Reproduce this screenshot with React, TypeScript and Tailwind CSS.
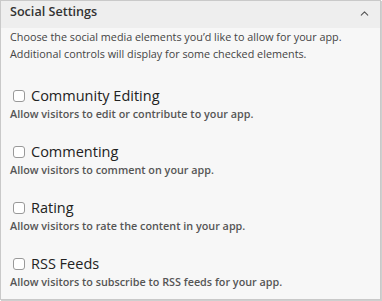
import { ChevronUp } from 'lucide-react'

const items = [
  { label: 'Community Editing', desc: 'Allow visitors to edit or contribute to your app.' },
  { label: 'Commenting', desc: 'Allow visitors to comment on your app.' },
  { label: 'Rating', desc: 'Allow visitors to rate the content in your app.' },
  { label: 'RSS Feeds', desc: 'Allow visitors to subscribe to RSS feeds for your app.' },
]

export default function App() {
  return (
    <div className="w-[382px] h-[301px] bg-white" style={{ fontFamily: '"Open Sans", sans-serif' }}>
      <div className="w-[381px] h-[300px] border border-[#c9c9c9] shadow-[1px_1px_0_#cfcfcf] bg-[#f7f7f7] flex flex-col">
        <div className="h-[27px] bg-[#eeeeee] flex items-center justify-between pl-[9px] pr-[9px] pb-[4px]">
          <span className="text-[12.6px] text-[#333] font-semibold">Social Settings</span>
          <ChevronUp size={13} strokeWidth={2} className="text-[#555] mt-[2px]" />
        </div>
        <div className="px-[9px]">
          <p className="text-[10.8px] leading-[17px] text-[#444]">
            Choose the social media elements you’d like to allow for your app.
            <br />
            Additional controls will display for some checked elements.
          </p>
          <div className="mt-[24px] flex flex-col gap-[20px]">
            {items.map(it => (
              <div key={it.label}>
                <label className="flex items-center gap-[6px] h-[19px]">
                  <span className="ml-[3px] w-[12px] h-[12px] rounded-[3px] border border-[#999] bg-white" />
                  <span className="text-[14.5px] text-[#222] font-medium">{it.label}</span>
                </label>
                <p className="text-[10.8px] leading-[17px] text-[#555] font-semibold">{it.desc}</p>
              </div>
            ))}
          </div>
        </div>
      </div>
    </div>
  )
}
